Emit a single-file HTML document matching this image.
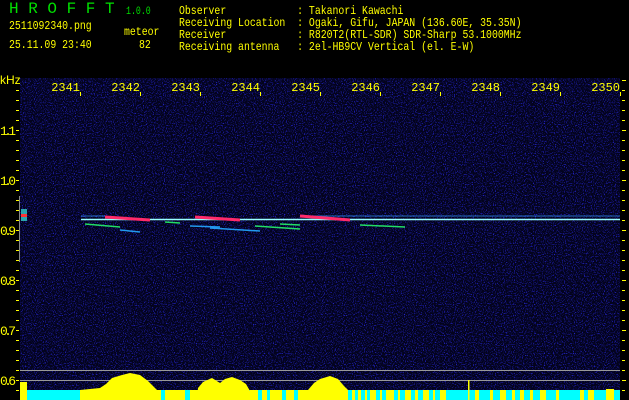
<!DOCTYPE html><html><head><style>
body{margin:0;width:629px;height:400px;background:#000;overflow:hidden;position:relative;font-family:"Liberation Mono",monospace;}
.t{position:absolute;color:#ffff00;font-size:12px;line-height:12px;white-space:pre;transform:scaleX(.82);transform-origin:0 0}
.g{color:#00e000}
</style></head><body>
<div class="t g" style="left:9px;top:3px;font-size:16px;letter-spacing:9.6px;transform:none">HROFFT</div>
<div class="t g" style="left:126px;top:6px;font-size:11px;transform:scaleX(.75)">1.0.0</div>
<div class="t" style="left:9px;top:20px">2511092340.png</div>
<div class="t" style="left:124px;top:26px">meteor</div>
<div class="t" style="left:9px;top:39px">25.11.09 23:40</div>
<div class="t" style="left:139px;top:39px">82</div>
<div class="t" style="left:179px;top:5px">Observer            : Takanori Kawachi</div>
<div class="t" style="left:179px;top:17px">Receiving Location  : Ogaki, Gifu, JAPAN (136.60E, 35.35N)</div>
<div class="t" style="left:179px;top:29px">Receiver            : R820T2(RTL-SDR) SDR-Sharp 53.1000MHz</div>
<div class="t" style="left:179px;top:41px">Receiving antenna   : 2el-HB9CV Vertical (el. E-W)</div>
<svg width="629" height="400" style="position:absolute;left:0;top:0">
<defs><filter id="n" x="0" y="0" width="100%" height="100%"><feTurbulence type="fractalNoise" baseFrequency="0.9" numOctaves="1" seed="3"/><feColorMatrix values="0 0 0 0 0.02  0 0 0 0 0.02  0 0 0 0 0.75  0 0 0 4 -2.1"/></filter></defs>
<rect x="20" y="78" width="600" height="322" fill="#03031c"/>
<rect x="20" y="78" width="600" height="322" filter="url(#n)"/>
<text x="0" y="84" fill="#ff0" font-size="12" font-family="Liberation Sans">kHz</text>
<g fill="#ff0" font-size="12" font-family="Liberation Mono" text-anchor="end">
<text x="80" y="91">2341</text><text x="140" y="91">2342</text><text x="200" y="91">2343</text><text x="260" y="91">2344</text><text x="320" y="91">2345</text><text x="380" y="91">2346</text><text x="440" y="91">2347</text><text x="500" y="91">2348</text><text x="560" y="91">2349</text><text x="620" y="91">2350</text>
</g>
<g fill="#ff0" font-size="13" font-family="Liberation Mono">
<text x="0" y="135" textLength="16">1.1</text><text x="0" y="185" textLength="16">1.0</text><text x="0" y="235" textLength="16">0.9</text><text x="0" y="285" textLength="16">0.8</text><text x="0" y="335" textLength="16">0.7</text><text x="0" y="385" textLength="16">0.6</text>
</g>
<g stroke="#ff0" stroke-width="1">
<path d="M80.5 92v4M140.5 92v4M200.5 92v4M260.5 92v4M320.5 92v4M380.5 92v4M440.5 92v4M500.5 92v4M560.5 92v4M620.5 92v4"/>
<path d="M16 90.5h3M16 100.5h3M16 110.5h3M16 120.5h3M16 130.5h3M16 140.5h3M16 150.5h3M16 160.5h3M16 170.5h3M16 180.5h3M16 190.5h3M16 200.5h3M16 210.5h3M16 220.5h3M16 230.5h3M16 240.5h3M16 250.5h3M16 260.5h3M16 270.5h3M16 280.5h3M16 290.5h3M16 300.5h3M16 310.5h3M16 320.5h3M16 330.5h3M16 340.5h3M16 350.5h3M16 360.5h3M16 370.5h3M16 380.5h3M16 390.5h3"/>
<path d="M622 80.5h4M622 90.5h3M622 100.5h3M622 110.5h3M622 120.5h3M622 130.5h4M622 140.5h3M622 150.5h3M622 160.5h3M622 170.5h3M622 180.5h4M622 190.5h3M622 200.5h3M622 210.5h3M622 220.5h3M622 230.5h4M622 240.5h3M622 250.5h3M622 260.5h3M622 270.5h3M622 280.5h4M622 290.5h3M622 300.5h3M622 310.5h3M622 320.5h3M622 330.5h4M622 340.5h3M622 350.5h3M622 360.5h3M622 370.5h3M622 380.5h4M622 390.5h3"/>
</g>
<path d="M19.5 196v66" stroke="#888"/>
<rect x="21" y="209" width="6" height="12" fill="#3cc" opacity=".8"/>
<rect x="21" y="214" width="6" height="3" fill="#f33"/>
<path d="M81 219.5H620" stroke="#9ff" stroke-width="1.5"/>
<path d="M81 216H105M300 216H620" stroke="#39f" stroke-width="1" opacity=".7"/>
<path d="M105 217L150 220M195 217L240 220M300 216L350 220" stroke="#ff2a6a" stroke-width="3"/>
<path d="M85 224L120 227M165 222L180 223M255 226L300 229M280 224L300 225M360 225L405 227" stroke="#2d6" stroke-width="1.5"/>
<path d="M120 230L140 232M210 228L260 231M190 226L220 227" stroke="#29e" stroke-width="1.5"/>
<g stroke="#999" stroke-width="1"><path d="M20 370.5H620M20 380.5H620M27 390.5H620"/></g>
<rect x="20" y="390" width="600" height="10" fill="#0ff"/>
<polygon fill="#ff0" points="20,382 27,382 27,400 20,400"/>
<polygon fill="#ff0" points="80,400 80,390 100,388 106,384 112,378 122,375 130,373 140,375 148,381 157,390 157,400"/>
<polygon fill="#ff0" points="197,400 198,388 203,382 212,378 220,383 225,379 232,377 240,380 246,384 250,391 250,400"/>
<polygon fill="#ff0" points="305,400 308,390 314,383 320,379 330,376 338,379 344,386 348,390 348,400"/>
<g fill="#ff0">
<rect x="157" y="390" width="4" height="10"/><rect x="165" y="390" width="20" height="10"/><rect x="190" y="390" width="10" height="10"/>
<rect x="250" y="390" width="8" height="10"/><rect x="262" y="390" width="5" height="10"/><rect x="270" y="390" width="12" height="10"/><rect x="286" y="390" width="8" height="10"/><rect x="298" y="390" width="14" height="10"/>
<rect x="352" y="390" width="3" height="10"/><rect x="358" y="390" width="3" height="10"/><rect x="365" y="390" width="2" height="10"/><rect x="370" y="390" width="6" height="10"/><rect x="380" y="390" width="2" height="10"/><rect x="386" y="390" width="8" height="10"/><rect x="398" y="390" width="2" height="10"/><rect x="405" y="390" width="6" height="10"/><rect x="415" y="390" width="3" height="10"/><rect x="423" y="390" width="6" height="10"/><rect x="433" y="390" width="2" height="10"/><rect x="440" y="390" width="6" height="10"/>
<rect x="468" y="380" width="1.5" height="20"/><rect x="475" y="390" width="4" height="10"/><rect x="490" y="390" width="3" height="10"/><rect x="500" y="390" width="6" height="10"/><rect x="512" y="390" width="3" height="10"/><rect x="520" y="390" width="4" height="10"/><rect x="530" y="390" width="3" height="10"/><rect x="540" y="390" width="6" height="10"/><rect x="556" y="390" width="3" height="10"/><rect x="580" y="390" width="4" height="10"/><rect x="588" y="390" width="6" height="10"/><rect x="606" y="389" width="8" height="11"/>
</g>
</svg>
</body></html>
